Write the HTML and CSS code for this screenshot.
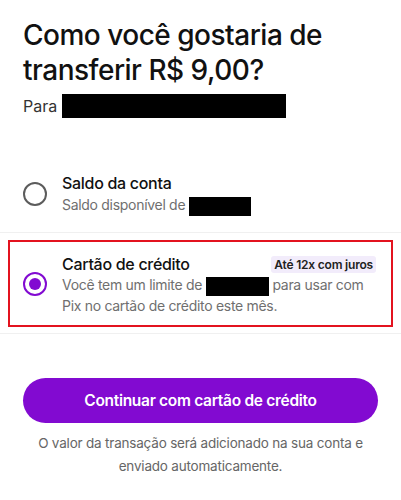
FILE: index.html
```html
<!DOCTYPE html>
<html lang="pt-BR">
<head>
  <meta charset="UTF-8" />
  <title>Transferir</title>
  <link rel="stylesheet" href="styles.css">
</head>
<body>
  <div class="page">
    <h1>Como você gostaria de transferir R$ 9,00?</h1>
    <div class="recipient">Para <span class="hidden hidden-name"></span></div>

    <div class="options">
      <div class="option">
        <span class="radio"></span>
        <div class="option-text">
          <div class="option-title">Saldo da conta</div>
          <div class="option-sub">Saldo disponível de <span class="hidden hidden-balance"></span></div>
        </div>
      </div>
      <div class="option option-selected">
        <div class="highlight">
          <span class="radio radio-on"></span>
          <div class="option-text">
            <div class="option-head">
              <div class="option-title">Cartão de crédito</div>
              <span class="badge">Até 12x com juros</span>
            </div>
            <div class="option-sub">Você tem um limite de <span class="hidden hidden-limit"></span> para usar com Pix no cartão de crédito este mês.</div>
          </div>
        </div>
      </div>
    </div>

    <button class="continue">Continuar com cartão de crédito</button>
    <p class="note">O valor da transação será adicionado na sua conta e enviado automaticamente.</p>
  </div>
</body>
</html>
```

FILE: styles.css
```css
body {
  margin: 0;
  font-family: Inter, "Noto Sans", sans-serif;
  background: #fff;
  color: #111;
}
.page {
  padding: 18px 23px 0;
}
h1 {
  margin: 0;
  font-size: 28px;
  line-height: 35px;
  font-weight: 500;
  letter-spacing: -0.5px;
}
.recipient {
  margin-top: 6px;
  display: flex;
  align-items: center;
  gap: 5px;
  font-size: 16px;
  color: #333;
}
.hidden {
  display: inline-block;
  background: #000;
  vertical-align: middle;
}
.hidden-name {
  width: 224px;
  height: 24px;
}
.hidden-balance {
  width: 62px;
  height: 19px;
}
.hidden-limit {
  width: 63px;
  height: 19px;
}
.options {
  margin: 40px -23px 0;
}
.option {
  display: flex;
  align-items: center;
  gap: 15px;
  padding: 14px 23px 16px;
  border-bottom: 1px solid #f0f0f0;
}
.option-selected {
  display: block;
  padding: 7px 8px 6px;
}
.highlight {
  display: flex;
  align-items: center;
  gap: 15px;
  border: 2px solid #e3131f;
  padding: 11px 15px 9px 13px;
}
.radio {
  flex: none;
  width: 20px;
  height: 20px;
  border: 2px solid #5c5c5c;
  border-radius: 50%;
  position: relative;
}
.radio-on {
  border-color: #820ad1;
}
.radio-on::after {
  content: "";
  position: absolute;
  left: 4px;
  top: 4px;
  width: 12px;
  height: 12px;
  border-radius: 50%;
  background: #820ad1;
}
.option-text {
  flex: 1;
}
.option-head {
  display: flex;
  align-items: center;
  justify-content: space-between;
}
.option-title {
  font-size: 16px;
  line-height: 22px;
  font-weight: 500;
  letter-spacing: -0.3px;
}
.option-sub {
  font-size: 14px;
  line-height: 20px;
  color: #6f6f6f;
  letter-spacing: -0.3px;
}
.option:first-child .option-sub {
  line-height: 22px;
}
.badge {
  background: #f2ecfb;
  color: #222;
  font-size: 12px;
  font-weight: 600;
  line-height: 17px;
  padding: 0 3px;
  border-radius: 3px;
  letter-spacing: -0.2px;
}
.continue {
  display: block;
  width: 100%;
  height: 45px;
  margin-top: 44px;
  border: none;
  border-radius: 23px;
  background: #820ad1;
  color: #fff;
  font-family: inherit;
  font-size: 15.5px;
  font-weight: 600;
  letter-spacing: -0.3px;
}
.note {
  margin: 9px 0 0;
  text-align: center;
  font-size: 13.5px;
  line-height: 23px;
  color: #666;
  letter-spacing: -0.2px;
}
```
